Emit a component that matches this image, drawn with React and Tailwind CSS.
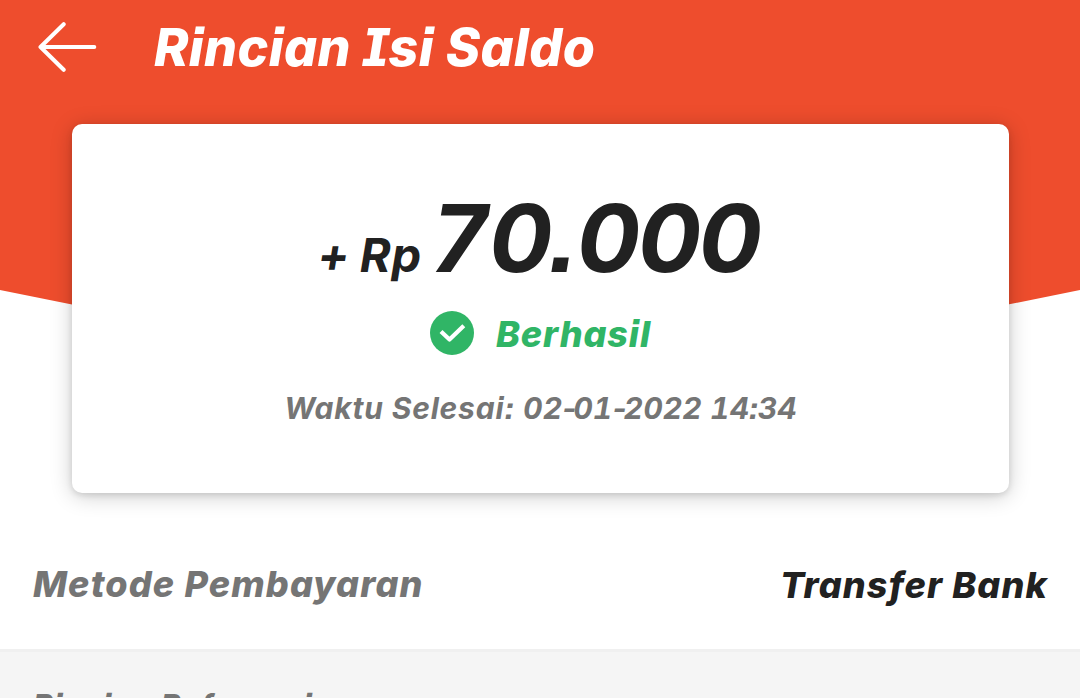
import React from 'react';

function BackArrow() {
  return (
    <svg className="w-[60px] h-[52px]" viewBox="0 0 60 52" fill="none" stroke="white" strokeWidth="4" strokeLinecap="round" strokeLinejoin="round">
      <path d="M56.3 26H2.5M25.7 3.2L2.5 26L25.7 48.8" />
    </svg>
  );
}

function CheckCircle() {
  return (
    <svg className="w-11 h-11" viewBox="0 0 44 44" fill="none">
      <circle cx="22" cy="22" r="22" fill="#30b566" />
      <path d="M11 20.5L19.5 28.5L33.8 14.7" stroke="white" strokeWidth="4.2" strokeLinejoin="round" />
    </svg>
  );
}

// Date with flat-based digits and short dashes
function DateText({ parts }) {
  return parts.map((part, i) => (
    <React.Fragment key={i}>
      {i > 0 && <span className="tracking-[-3px]">-</span>}
      <span className="tracking-[0.2px] [font-feature-settings:'ss07','calt'_0,'tnum']">{part}</span>
    </React.Fragment>
  ));
}

function App() {
  return (
    <div className="h-[698px] w-[1080px] overflow-hidden bg-white font-['Inter','Liberation_Sans',sans-serif] font-extrabold italic whitespace-nowrap [font-feature-settings:'cv11','cv08','ss07','calt'_0]">
      <div className="grid h-[519px]">
        {/* Orange backdrop */}
        <svg className="col-start-1 row-start-1 h-[330px] w-[1080px]" viewBox="0 0 1080 330">
          <path d="M0 0H1080V290L1008 304.5Q540 350 72 304.5L0 290Z" fill="#ee4d2d" />
        </svg>

        <div className="col-start-1 row-start-1">
          {/* Header */}
          <header className="flex h-[94px] items-center pl-[38px]">
            <BackArrow />
            <h1 className="ml-[56px] pt-px text-[52px] leading-[54px] tracking-[0.4px] text-white">Rincian Isi Saldo</h1>
          </header>

          {/* Amount card */}
          <div className="mt-[30px] ml-[72px] flex h-[369px] w-[937px] flex-col items-center rounded-[10px] bg-white pt-[67px] shadow-[0_3px_22px_rgba(0,0,0,0.2),0_2px_6px_rgba(0,0,0,0.12)]">
            <div className="flex items-baseline font-bold text-[#212121]">
              <span className="mr-[10px] text-[47px] leading-[47px] tracking-[1px] [word-spacing:-3px]">+ Rp</span>
              <span className="text-[94px] leading-[94px] tracking-[-2.5px]">
                <span className="tracking-[2px]">7</span>
                <span className="tracking-[-2px]">0.</span>
                <span className="mr-[4px]">000</span>
              </span>
            </div>
            <div className="mt-[26px] flex items-center text-[#30b566]">
              <CheckCircle />
              <span className="ml-[22px] pt-0.5 text-[36px] leading-[42px] tracking-[0.9px]">Berhasil</span>
            </div>
            <p className="mt-[37px] text-[30px] leading-8 font-bold text-[#757575] tracking-[0.8px]">
              Waktu Selesai: <DateText parts={['02', '01', '2022 14:34']} />
            </p>
          </div>
        </div>
      </div>

      {/* Payment method */}
      <div className="flex h-[130px] items-center justify-between px-[33px] text-[36px] tracking-[1.15px]">
        <span className="text-[#757575]">Metode Pembayaran</span>
        <span className="-mr-px pt-[2px] text-[#212121]">Transfer Bank</span>
      </div>

      {/* Reference details */}
      <div className="h-[80px] border-t-3 border-[#f0f0f0] bg-[#f5f5f5] pt-[37px] pl-[33px] text-[30px] leading-8 tracking-[1.15px] text-[#757575]">
        Rincian Referensi
      </div>
    </div>
  );
}

export default App;
